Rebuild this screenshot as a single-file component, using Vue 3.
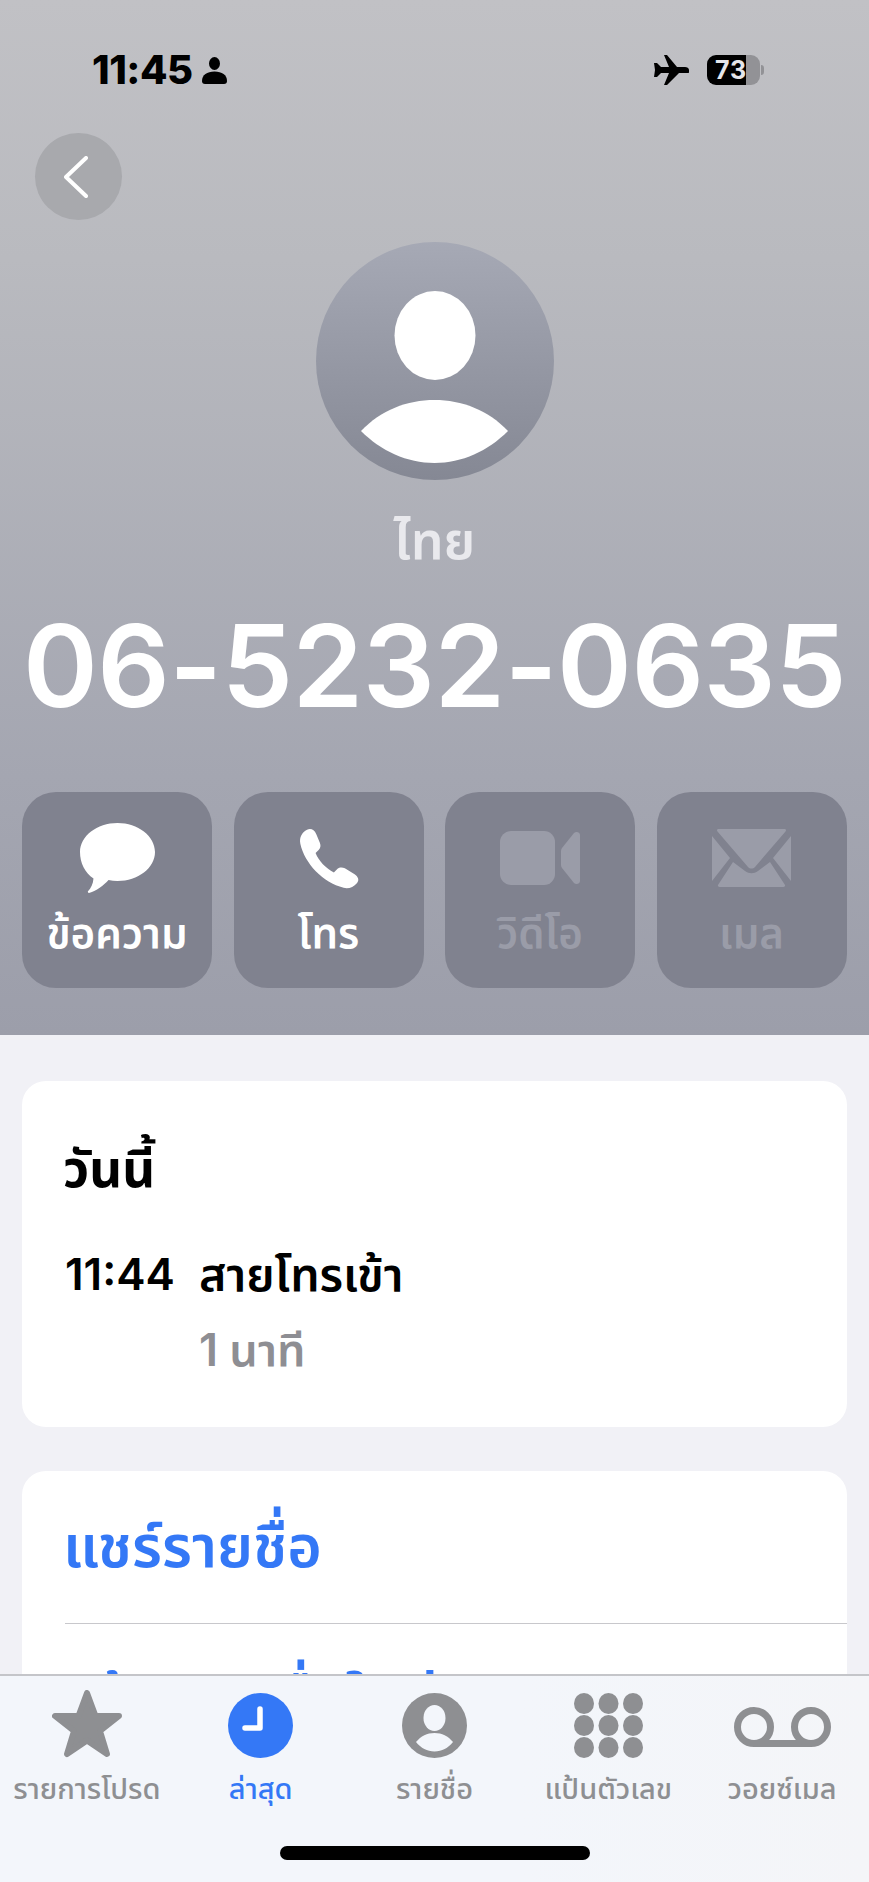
<template>
  <div class="screen">
    <header class="hero">
      <div class="status">
        <div class="status-left">
          <span class="clock">11:45</span>
          <svg class="person" viewBox="0 0 25 27"><ellipse cx="12.5" cy="6.500" rx="5.500" ry="6.500" /><path d="M0 24c0-6 5-9.500 12.500-9.500S25 18 25 24c0 2-1 3-3 3H3c-2 0-3-1-3-3z" /></svg>
        </div>
        <div class="status-right">
          <svg class="plane" viewBox="0 0 35 30"><path d="M35 15c0-2-2-3-4-3h-8L13 0h-3l5 12H7L3 8H0l1 7-1 7h3l4-4h8l-5 12h3l12-12h8c2 0 4-1 4-3z" /></svg>
          <div class="battery"><span>73</span></div>
          <i class="nub"></i>
        </div>
      </div>

      <button class="back">
        <svg viewBox="0 0 24 42" width="24" height="42"><path d="M22 2 2 21l20 19" /></svg>
      </button>

      <div class="avatar">
        <svg viewBox="0 0 238 238" width="238" height="238">
          <ellipse cx="119" cy="93.500" rx="40.500" ry="44.500" />
          <path d="M45 189C65 168 91 158 118.500 158s53.500 10 73.500 31c-20 20-46 32-73.500 32S65 209 45 189z" />
        </svg>
      </div>
      <div class="label">ไทย</div>
      <div class="number">06-5232-0635</div>

      <div class="actions">
        <div class="action">
          <div class="icon">
            <svg viewBox="0 0 75 70" width="75" height="70"><path d="M37.500 0C58 0 75 13 75 29S58 58 37.500 58c-3 0-6-.3-9-.9C24 62 17 68 9 70c-1 0-1.500-1-1-1.700 3-3.300 5-7 5.500-12.800C5 50 0 40 0 29 0 13 17 0 37.500 0z" /></svg>
          </div>
          <span>ข้อความ</span>
        </div>
        <div class="action">
          <div class="icon">
            <svg viewBox="0 0 100 100" width="62" height="61"><path d="M14 3c6-3 12 0 15 7l6 14c2 5 1 9-2 12l-5 5c5 13 17 25 30 32l6-6c3-3 8-3 12-1l16 10c6 4 8 10 4 14-6 7-14 10-22 8C40 90 10 58 3 26 1 15 6 7 14 3z" /></svg>
          </div>
          <span>โทร</span>
        </div>
        <div class="action off">
          <div class="icon">
            <svg viewBox="0 0 80 54" width="80" height="54"><rect x="0" y="0" width="55" height="54" rx="11" /><path d="M61 20c0-1 .4-2 1-3l12-15c2-2 6-1 6 2v46c0 3-4 4-6 2L62 37c-.6-1-1-2-1-3z" /></svg>
          </div>
          <span>วิดีโอ</span>
        </div>
        <div class="action off">
          <div class="icon">
            <svg viewBox="0 0 79 58" width="79" height="58"><path d="M7 0h65c2 0 2.500 1 1.500 2.500L43 38c-2 2-5 2-7 0L5.500 2.500C4.500 1 5 0 7 0zM0 7l18 22L0 52zM79 7 61 29l18 23zM21 33l12 9c4 3 9 3 13 0l12-9 15 23c.5 1-.5 2-1.500 2H7.500C6.500 58 5.500 57 6 56z" /></svg>
          </div>
          <span>เมล</span>
        </div>
      </div>
    </header>

    <main class="content">
      <section class="card log">
        <h2>วันนี้</h2>
        <div class="call">
          <span class="time">11:44</span>
          <span class="kind">สายโทรเข้า</span>
        </div>
        <div class="duration">1 นาที</div>
      </section>

      <section class="card links">
        <div class="link">แชร์รายชื่อ</div>
        <div class="link second">สร้างรายชื่อใหม่</div>
      </section>
    </main>

    <nav class="tabbar">
      <div class="tabs">
        <div class="tab">
          <div class="glyph">
            <svg viewBox="0 0 70 68" width="70" height="68"><path d="M35 3 43.500 26H67L48 41 55 64 35 50.500 15 64 22 41 3 26H26.500z" fill="#8e8f92" stroke="#8e8f92" stroke-width="6" stroke-linejoin="round" /></svg>
          </div>
          <span>รายการโปรด</span>
        </div>
        <div class="tab active">
          <div class="glyph">
            <svg viewBox="0 0 65 65" width="65" height="65"><circle cx="32.500" cy="32.500" r="32.500" fill="#3478f6" /><path d="M32 16v19H17" fill="none" stroke="#fff" stroke-width="5.500" stroke-linecap="round" stroke-linejoin="round" /></svg>
          </div>
          <span>ล่าสุด</span>
        </div>
        <div class="tab">
          <div class="glyph">
            <svg viewBox="0 0 65 65" width="65" height="65"><circle cx="32.500" cy="32.500" r="32.500" fill="#8e8f92" /><ellipse cx="32.500" cy="25" rx="11" ry="13" fill="#f3f6fb" /><path d="M14 49c5-6 11-9 18.500-9S46 43 51 49c-5 6-11 9.500-18.500 9.500S19 55 14 49z" fill="#f3f6fb" /></svg>
          </div>
          <span>รายชื่อ</span>
        </div>
        <div class="tab">
          <div class="glyph">
            <svg viewBox="0 0 69 65" width="69" height="65" fill="#8e8f92"><g v-for="y in [10.500, 32.500, 54.500]" :key="y"><ellipse v-for="x in [10, 34.500, 59]" :key="x" :cx="x" :cy="y" rx="10" ry="10.500" /></g></svg>
          </div>
          <span>แป้นตัวเลข</span>
        </div>
        <div class="tab">
          <div class="glyph">
            <svg class="vm" viewBox="0 0 97 42" width="97" height="42"><path d="M20 37.500h57M20 37.500a16.500 16.500 0 1 1 0-33 16.500 16.500 0 0 1 0 33zM77 37.500a16.500 16.500 0 1 1 0-33 16.500 16.500 0 0 1 0 33z" fill="none" stroke="#8e8f92" stroke-width="7" /></svg>
          </div>
          <span>วอยซ์เมล</span>
        </div>
      </div>
      <div class="home"></div>
    </nav>
  </div>
</template>

<script setup>
</script>

<style>
html, body {
  margin: 0;
  background: #f1f1f6;
}
</style>

<style scoped>
.screen {
  position: relative;
  width: 869px;
  height: 1882px;
  overflow: hidden;
  background: #f1f1f6;
  font-family: Inter, "Noto Sans", "Noto Sans Thai", sans-serif;
  color: #000;
}

.hero {
  height: 1035px;
  box-sizing: border-box;
  padding-top: 55px;
  background: linear-gradient(180deg, #c1c1c5 0%, #b9babf 25%, #a4a6b1 75%, #9c9eaa 100%);
}

.status {
  display: flex;
  justify-content: space-between;
  height: 30px;
  padding: 0 105px 0 92px;
}

.status-left,
.status-right {
  display: flex;
  align-items: center;
}

.clock {
  font-size: 40px;
  font-weight: 800;
  letter-spacing: -0.5px;
  line-height: 30px;
}

.person {
  width: 25px;
  height: 27px;
  margin-left: 9px;
}

.plane {
  width: 35px;
  height: 30px;
  margin-right: 18px;
}

.battery {
  width: 53px;
  height: 30px;
  border-radius: 9px;
  background: linear-gradient(90deg, #000 0 39px, #929296 39px);
  color: #e6e6ea;
  font-size: 25px;
  font-weight: 700;
  letter-spacing: 1px;
  line-height: 30px;
  box-sizing: border-box;
  padding-left: 8px;
  white-space: nowrap;
}

.nub {
  width: 3px;
  height: 10px;
  margin-left: 1px;
  border-radius: 0 3px 3px 0;
  background: #929296;
}

.back {
  display: flex;
  align-items: center;
  justify-content: center;
  width: 87px;
  height: 87px;
  margin: 48px 0 0 35px;
  padding: 0 6px 0 0;
  border: 0;
  border-radius: 50%;
  background: #a8a9ad;
}

.back path {
  fill: none;
  stroke: #fff;
  stroke-width: 4;
  stroke-linecap: round;
  stroke-linejoin: round;
}

.avatar {
  width: 238px;
  height: 238px;
  margin: 22px auto 0;
  border-radius: 50%;
  background: linear-gradient(180deg, #a6a9b5, #858894);
}

.avatar svg {
  display: block;
  fill: #fff;
}

.label {
  margin-top: 31px;
  height: 60px;
  font-size: 52px;
  font-weight: 600;
  line-height: 60px;
  text-align: center;
  color: #e9e9ed;
}

.number {
  margin-top: 35px;
  font-size: 113.500px;
  font-weight: 600;
  letter-spacing: -0.5px;
  line-height: 120px;
  text-align: center;
  white-space: nowrap;
  color: #fff;
}

.actions {
  display: grid;
  grid-template-columns: repeat(4, 190px);
  column-gap: 21.500px;
  margin: 66px 22px 0;
}

.action {
  display: flex;
  flex-direction: column;
  align-items: center;
  height: 196px;
  box-sizing: border-box;
  padding-top: 28px;
  border-radius: 34px;
  background: #80828f;
  color: #fff;
  fill: #fff;
}

.icon {
  display: flex;
  align-items: center;
  justify-content: center;
  height: 76px;
}

.action span {
  margin-top: 11px;
  font-size: 42px;
  font-weight: 600;
  line-height: 52px;
}

.action.off {
  color: #9a9ca8;
  fill: #9a9ca8;
}

.content {
  display: flex;
  flex-direction: column;
  gap: 44px;
  padding: 46px 22px 0;
}

.card {
  border-radius: 24px;
  background: #fff;
}

.log {
  height: 346px;
  box-sizing: border-box;
  padding: 56px 43px 0;
}

.log h2 {
  margin: 0 0 0 -2px;
  font-size: 51px;
  font-weight: 700;
  line-height: 64px;
}

.call {
  display: flex;
  align-items: center;
  margin-top: 43px;
  font-weight: 600;
  line-height: 60px;
}

.time {
  width: 134px;
  font-size: 44px;
}

.kind {
  font-size: 46.500px;
}

.duration {
  margin: 16px 0 0 134px;
  font-size: 45px;
  font-weight: 600;
  line-height: 60px;
  color: #8e8e93;
}

.links {
  padding-left: 43px;
}

.link {
  height: 152px;
  box-sizing: border-box;
  padding-top: 40px;
  font-size: 59px;
  font-weight: 600;
  line-height: 70px;
  white-space: nowrap;
  color: #3478f6;
  text-indent: -2px;
}

.link.second {
  border-top: 1px solid #c8c8cc;
}

.tabbar {
  position: absolute;
  left: 0;
  right: 0;
  bottom: 0;
  height: 208px;
  box-sizing: border-box;
  border-top: 2px solid #c4c5c9;
  background: linear-gradient(90deg, #f3f6fb 0%, #f3f6fb 60%, #f4f5f8 100%);
}

.tabs {
  display: grid;
  grid-template-columns: repeat(5, 1fr);
  padding-top: 14px;
}

.tab {
  display: flex;
  flex-direction: column;
  align-items: center;
  color: #8e8f92;
}

.glyph {
  display: flex;
  align-items: flex-end;
  height: 68px;
}

.glyph svg {
  display: block;
}

.glyph .vm {
  margin-bottom: 10px;
}

.tab span {
  margin-top: 11px;
  font-size: 29px;
  font-weight: 500;
  line-height: 40px;
  white-space: nowrap;
}

.tab.active {
  color: #3478f6;
}

.home {
  position: absolute;
  left: 280px;
  bottom: 22px;
  width: 310px;
  height: 14px;
  border-radius: 7px;
  background: #000;
}
</style>
